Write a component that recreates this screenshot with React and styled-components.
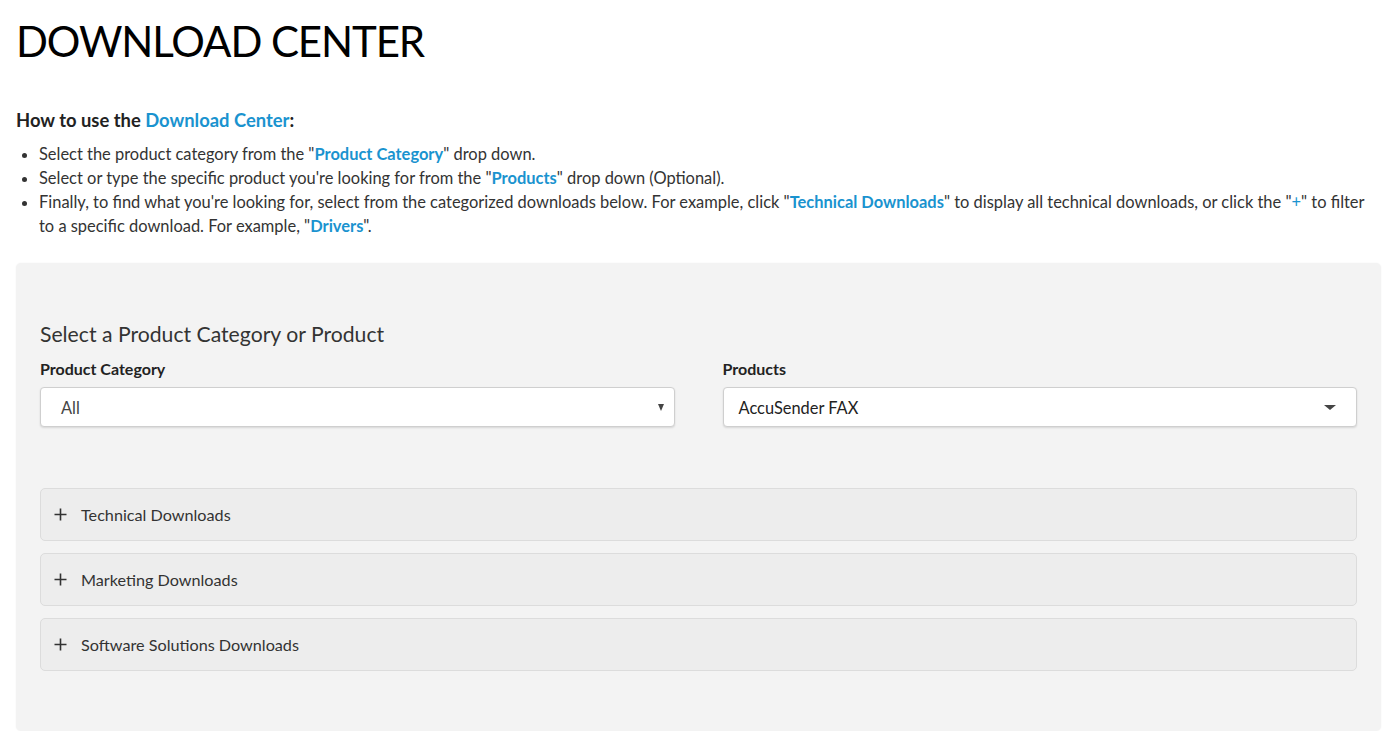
import React from 'react';
import styled, { createGlobalStyle } from 'styled-components';

const GlobalStyle = createGlobalStyle`
	html, body {
		margin: 0;
		padding: 0;
		background: #fff;
	}
	body {
		font-family: 'Lato', 'Liberation Sans', sans-serif;
		color: #333;
	}
	* {
		box-sizing: border-box;
	}
`;

const Page = styled.div`
	padding: 14px 19px 0 16px;
	width: 1400px;
`;

const Title = styled.h1`
	margin: 0;
	font-size: 42px;
	font-weight: 400;
	line-height: 54px;
	color: #000;
	letter-spacing: -1.1px;
`;

const HowTo = styled.h3`
	margin: 40px 0 0 0;
	font-size: 18.4px;
	font-weight: 700;
	line-height: 24px;
	color: #222;
`;

const Link = styled.span`
	color: #1a93cf;
	font-weight: ${(props) => (props.plain ? 400 : 700)};
`;

const Steps = styled.ul`
	margin: 10px 0 0 0;
	padding-left: 23px;
	font-size: 16.45px;
	line-height: 24px;
	color: #333;
`;

const Panel = styled.section`
	margin-top: 25px;
	padding: 56px 24px 60px 24px;
	background: #f3f3f3;
	border-radius: 5px;
	box-shadow: 0 0 2px rgba(0, 0, 0, 0.06);
`;

const PanelTitle = styled.h4`
	margin: 0;
	font-size: 21.2px;
	font-weight: 400;
	line-height: 30px;
	color: #333;
`;

const Fields = styled.div`
	margin-top: 9px;
	display: grid;
	grid-template-columns: 1fr 1fr;
	column-gap: 48px;
`;

const Field = styled.div`
	display: flex;
	flex-direction: column;
`;

const Label = styled.label`
	font-size: 16px;
	font-weight: 700;
	line-height: 22px;
	color: #222;
	margin-bottom: 7px;
`;

const Select = styled.div`
	height: 40px;
	padding: 0 ${(props) => (props.chosen ? '20px' : '10px')} 0 ${(props) => (props.chosen ? '15px' : '20px')};
	display: flex;
	align-items: center;
	justify-content: space-between;
	background: #fff;
	border: 1px solid #cfcfcf;
	border-radius: 4px;
	box-shadow: 0 1px 2px rgba(0, 0, 0, 0.12);
	font-size: 16.4px;
	color: ${(props) => (props.chosen ? '#222' : '#444')};
`;

const Caret = styled.span`
	width: 0;
	height: 0;
	border-left: ${(props) => (props.big ? '6px' : '3.5px')} solid transparent;
	border-right: ${(props) => (props.big ? '6px' : '3.5px')} solid transparent;
	border-top: ${(props) => (props.big ? '5px' : '7px')} solid #444;
`;

const Accordion = styled.div`
	margin-top: 61px;
	display: flex;
	flex-direction: column;
	gap: 12px;
`;

const AccordionItem = styled.div`
	height: 53px;
	padding: 0 13px;
	display: flex;
	align-items: center;
	gap: 14px;
	background: #ededed;
	border: 1px solid #dcdcdc;
	border-radius: 5px;
	font-size: 16.2px;
	color: #333;
`;

const Plus = styled.svg`
	width: 13px;
	height: 13px;
	flex-shrink: 0;
`;

const sections = ['Technical Downloads', 'Marketing Downloads', 'Software Solutions Downloads'];

const App = () => (
	<>
		<GlobalStyle />
		<Page>
			<Title>DOWNLOAD CENTER</Title>
			<HowTo>How to use the <Link>Download Center</Link>:</HowTo>
			<Steps>
				<li>Select the product category from the "<Link>Product Category</Link>" drop down.</li>
				<li>Select or type the specific product you're looking for from the "<Link>Products</Link>" drop down (Optional).</li>
				<li>
					Finally, to find what you're looking for, select from the categorized downloads below. For example, click "<Link>Technical Downloads</Link>" to display all technical downloads, or click the "<Link plain>+</Link>" to filter to a specific download. For example, "<Link>Drivers</Link>".
				</li>
			</Steps>

			<Panel>
				<PanelTitle>Select a Product Category or Product</PanelTitle>
				<Fields>
					<Field>
						<Label>Product Category</Label>
						<Select>
							All
							<Caret />
						</Select>
					</Field>
					<Field>
						<Label>Products</Label>
						<Select chosen>
							AccuSender FAX
							<Caret big />
						</Select>
					</Field>
				</Fields>

				<Accordion>
					{sections.map((name) => (
						<AccordionItem key={name}>
							<Plus viewBox="0 0 13 13">
								<path d="M6.5 0.5v12M0.5 6.5h12" stroke="#333" strokeWidth="1.6" />
							</Plus>
							{name}
						</AccordionItem>
					))}
				</Accordion>
			</Panel>
		</Page>
	</>
);

export default App;
